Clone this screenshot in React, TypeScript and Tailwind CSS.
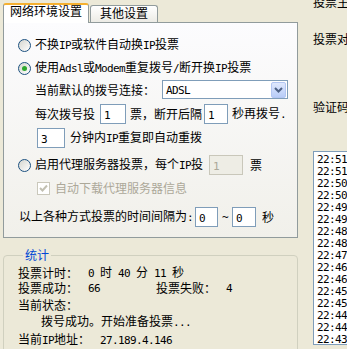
import React from "react";

const MONO = "font-['DejaVu_Sans_Mono',monospace] text-[11px] tracking-[-0.62px]";

// SimSun-like mixing: CJK runs at 12px, ASCII runs as 6px-wide monospace
const T: React.FC<{ s: string; className?: string }> = ({ s, className }) => {
  const parts = s.match(/[\x00-\x7F]+|[^\x00-\x7F]+/g) ?? [];
  return (
    <span className={`whitespace-pre ${className ?? ""}`}>
      {parts.map((p, i) =>
        p.charCodeAt(0) < 128 ? (
          <span key={i} className={MONO}>
            {p}
          </span>
        ) : (
          <span key={i}>{p}</span>
        )
      )}
    </span>
  );
};

const Radio: React.FC<{ on?: boolean }> = ({ on }) => (
  <span className="flex h-[13px] w-[13px] shrink-0 items-center justify-center rounded-full border border-[#1c5180] bg-linear-to-br from-[#d6d6cf] to-white">
    {on && <span className="h-[5px] w-[5px] rounded-full bg-[#2fa82f]" />}
  </span>
);

const Box: React.FC<{ v: string; w: string; dis?: boolean; className?: string }> = ({
  v,
  w,
  dis,
  className,
}) => (
  <span
    className={`flex h-[20px] shrink-0 items-start border pl-[3px] pt-[2px] ${
      dis ? "border-[#c9c7ba] bg-[#eeede5] text-[#aca899]" : "border-[#7f9db9] bg-white"
    } ${w} ${className ?? ""}`}
  >
    <T s={v} />
  </span>
);

const TIMES = [
  "22:51",
  "22:51",
  "22:50",
  "22:50",
  "22:49",
  "22:49",
  "22:48",
  "22:48",
  "22:47",
  "22:46",
  "22:46",
  "22:45",
  "22:45",
  "22:44",
  "22:44",
  "22:43",
];

export default function App() {
  return (
    <div className="flex h-[349px] w-[347px] items-start overflow-hidden bg-[#ece9d8] font-['Noto_Sans_CJK_SC','Noto_Sans',sans-serif] text-[12px] leading-[14px] text-black">
      {/* left column */}
      <div className="ml-[3px] mt-[3px] flex w-[295px] shrink-0 flex-col">
        {/* tabs */}
        <div className="flex h-[19px] shrink-0 items-end">
          <div className="relative z-10 -mb-px flex h-[20px] w-[86px] justify-center rounded-t-[3px] border-x border-t-2 border-x-[#919b9c] border-t-[#f5b030] bg-white leading-[12px]">
            <T s="网络环境设置" />
          </div>
          <div className="ml-px flex h-[17px] w-[68px] justify-center rounded-t-[3px] border-x border-t border-[#919b9c] bg-linear-to-b from-white to-[#ecebe5] pt-[1px] leading-[12px]">
            <T s="其他设置" />
          </div>
        </div>

        {/* tab panel */}
        <div className="flex h-[216px] shrink-0 flex-col border border-[#919b9c] bg-linear-to-b from-[#fcfcfe] to-[#f1f0ea]">
          <div className="mt-[13px] flex h-[18px] items-center gap-[4px] pl-[14px]">
            <Radio />
            <T s="不换IP或软件自动换IP投票" />
          </div>
          <div className="mt-[5px] flex h-[18px] items-center gap-[4px] pl-[14px]">
            <Radio on />
            <T s="使用Adsl或Modem重复拨号/断开换IP投票" />
          </div>
          <div className="mt-[3px] flex h-[19px] items-center pl-[31px]">
            <T s="当前默认的拨号连接：" />
            <span className="ml-[7px] flex h-[19px] w-[126px] items-center justify-between border border-[#7f9db9] bg-white pl-[3px] pr-px">
              <T s="ADSL" />
              <span className="flex h-[16px] w-[15px] items-center justify-center rounded-[2px] border border-[#b3c6f3] bg-linear-to-b from-[#dfe8fd] to-[#b8ccf8]">
                <svg width="9" height="6" viewBox="0 0 9 6">
                  <path d="M1 1l3.5 3.5L8 1" stroke="#4d6185" strokeWidth="2" fill="none" />
                </svg>
              </span>
            </span>
          </div>
          <div className="mt-[5px] flex h-[20px] items-center pl-[31px]">
            <T s="每次拨号投" />
            <Box v="1" w="w-[26px]" className="ml-[5px]" />
            <T s="票，断开后隔" className="ml-[4px]" />
            <Box v="1" w="w-[24px]" className="ml-[2px]" />
            <T s="秒再拨号." className="ml-[4px]" />
          </div>
          <div className="mt-[4px] flex h-[20px] items-center pl-[33px]">
            <Box v="3" w="w-[28px]" />
            <T s="分钟内IP重复即自动重拨" className="ml-[5px]" />
          </div>
          <div className="mt-[7px] flex h-[20px] items-center pl-[14px]">
            <Radio />
            <T s="启用代理服务器投票，每个IP投" className="ml-[4px]" />
            <Box v="1" w="w-[34px]" dis className="ml-[6px]" />
            <T s="票" className="ml-[7px]" />
          </div>
          <div className="mt-[5px] flex h-[16px] items-center pl-[33px]">
            <span className="flex h-[13px] w-[13px] shrink-0 items-center justify-center border border-[#cac8bb] bg-white">
              <svg width="9" height="9" viewBox="0 0 9 9">
                <path d="M1 4l2.5 2.5L8 1.5" stroke="#c2c0b2" strokeWidth="2" fill="none" />
              </svg>
            </span>
            <T s="自动下载代理服务器信息" className="ml-[5px] text-[#aca899]" />
          </div>
          <div className="mt-[11px] flex h-[20px] items-center pl-[15px]">
            <T s="以上各种方式投票的时间间隔为:" />
            <Box v="0" w="w-[23px]" className="ml-[2px]" />
            <T s="~" className="ml-[4px]" />
            <Box v="0" w="w-[24px]" className="ml-[4px]" />
            <T s="秒" className="ml-[6px]" />
          </div>
        </div>

        {/* stats group */}
        <fieldset className="mt-[10px] h-[120px] shrink-0 rounded-[4px] border border-[#d0d0bf] pl-[14px]">
          <legend className="ml-[5px] px-[2px] leading-[14px] text-[#0046d5]">统计</legend>
          <div className="mt-[4px] flex h-[14px] items-center">
            <T s="投票计时：" className="w-[70px]" />
            <T s="0 时 40 分 11 秒" />
          </div>
          <div className="mt-px flex h-[14px] items-center">
            <T s="投票成功：" className="w-[70px]" />
            <T s="66" className="w-[68px]" />
            <T s="投票失败：" className="w-[70px]" />
            <T s="4" />
          </div>
          <div className="mt-[3px] flex h-[14px] items-center">
            <T s="当前状态：" />
          </div>
          <div className="mt-[3px] flex h-[14px] items-center pl-[23px]">
            <T s="拨号成功。开始准备投票..." />
          </div>
          <div className="mt-[4px] flex h-[14px] items-center">
            <T s="当前IP地址：" className="w-[82px]" />
            <T s="27.189.4.146" />
          </div>
        </fieldset>
      </div>

      {/* right column, clipped by the window edge */}
      <div className="ml-[15px] flex w-[60px] shrink-0 flex-col">
        <T s="投票主题：" className="-mt-[5px] block" />
        <T s="投票对象：" className="mt-[23px] block" />
        <T s="验证码：" className="mt-[54px] block" />
        <div className="mt-[37px] h-[194px] shrink-0 overflow-hidden border border-[#7f9db9] bg-white pl-[3px]">
          {TIMES.map((t, i) => (
            <div key={i} className="h-[12px] leading-[12px]">
              <T s={t} />
            </div>
          ))}
        </div>
      </div>
    </div>
  );
}
